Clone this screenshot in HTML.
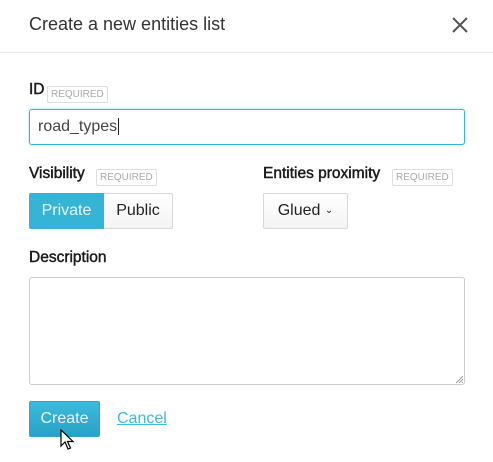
<!DOCTYPE html>
<html><head><style>
*{box-sizing:border-box;margin:0;padding:0}
body{width:493px;height:462px;background:#fff;font-family:"Liberation Sans",sans-serif;position:relative;overflow:hidden;color:#222}
.a{position:absolute}
.title{left:29px;top:14px;font-size:18px;color:#333}
.hr{left:0;top:52px;width:493px;height:1px;background:#e8e8e8}
.lbl{font-size:15.5px;color:#1a1a1a;-webkit-text-stroke:0.45px #1a1a1a}
.req{font-size:10px;color:#aaa;border:1px solid #ddd;height:17px;line-height:16px;padding:0 3px;border-radius:2px}
.btn{height:36px;border:1px solid #d8d8d8;font-size:16px;line-height:34px;text-align:center;background:linear-gradient(#fff,#f4f4f4)}
</style></head><body>
<div class="a title">Create a new entities list</div>
<svg class="a" style="left:452px;top:17px" width="16" height="16" viewBox="0 0 16 16"><path d="M1 1L15 15M15 1L1 15" stroke="#555" stroke-width="2"/></svg>
<div class="a hr"></div>
<div class="a lbl" style="left:29px;top:81px">ID</div>
<div class="a req" style="left:47px;top:86px">REQUIRED</div>
<div class="a" style="left:29px;top:109px;width:436px;height:36px;border:1px solid #3bb3d6;border-radius:3px;box-shadow:0 0 2px #9fd8ea"></div>
<div class="a" style="left:38px;top:118px;font-size:16px;color:#444">road_types<span style="border-left:1px solid #222;margin-left:1px"></span></div>
<div class="a lbl" style="left:29px;top:165px">Visibility</div>
<div class="a req" style="left:96px;top:169px">REQUIRED</div>
<div class="a lbl" style="left:263px;top:165px">Entities proximity</div>
<div class="a req" style="left:392px;top:169px">REQUIRED</div>
<div class="a btn" style="left:29px;top:193px;width:75px;background:#35b4d6;border-color:#35b4d6;color:#e6f6fb;border-radius:2px 0 0 2px">Private</div>
<div class="a btn" style="left:104px;top:193px;width:69px;border-left:none;color:#222;border-radius:0 2px 2px 0">Public</div>
<div class="a btn" style="left:263px;top:193px;width:85px;color:#222;border-radius:2px">Glued <span style="font-size:10px;position:relative;top:-2px">&#8964;</span></div>
<div class="a lbl" style="left:29px;top:249px">Description</div>
<div class="a" style="left:29px;top:277px;width:436px;height:108px;border:1px solid #ccc;border-radius:3px"></div>
<svg class="a" style="left:455px;top:375px" width="8" height="8"><path d="M1 8L8 1M4 8L8 4M7 8L8 7" stroke="#999"/></svg>
<div class="a btn" style="left:29px;top:401px;width:71px;background:linear-gradient(#3cbadb,#28a3c5);border-color:#2aa5c7;color:#e6f6fb;border-radius:2px">Create</div>
<div class="a" style="left:117px;top:410px;font-size:16px;color:#3bbbe0;text-decoration:underline">Cancel</div>
<svg class="a" style="left:60px;top:429px" width="16" height="22" viewBox="0 0 16 22"><path d="M1 1L1 17L5 13L8 20L10.5 19L7.5 12.5L13 12.5Z" fill="#fff" stroke="#000" stroke-width="1.2"/></svg>
</body></html>
